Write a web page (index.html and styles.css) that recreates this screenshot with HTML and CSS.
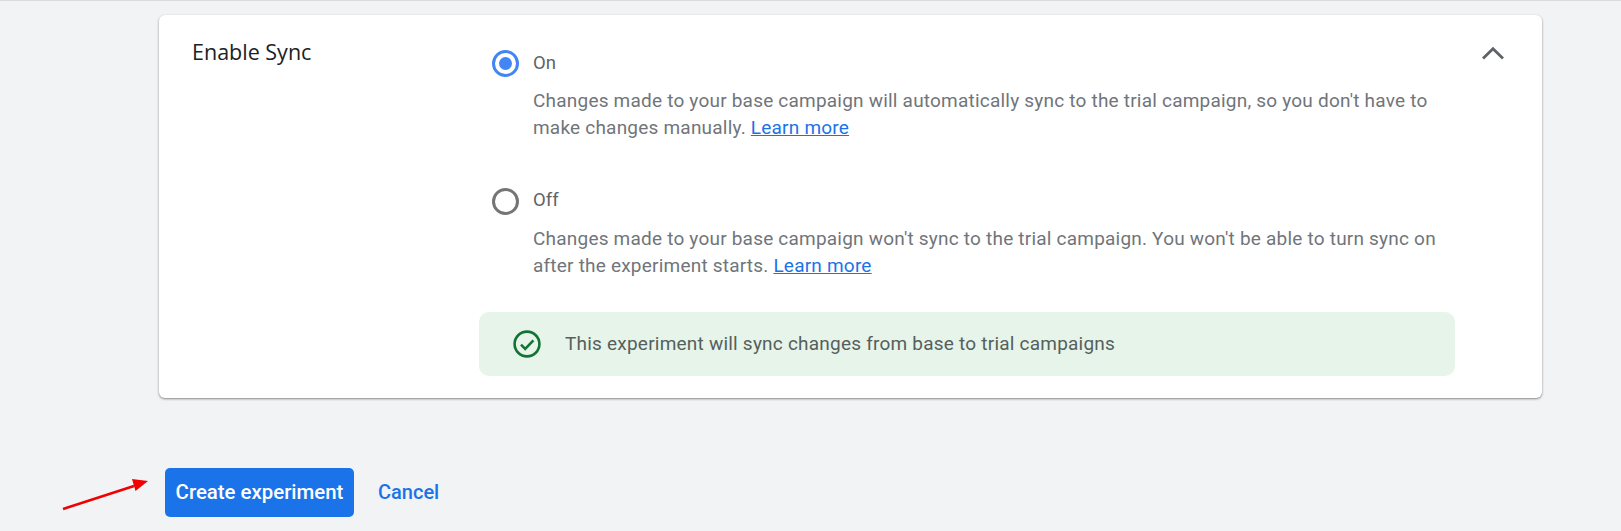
FILE: index.html
```html
<!DOCTYPE html>
<html lang="en">
<head>
<meta charset="utf-8">
<title>Enable Sync</title>
<link rel="stylesheet" href="styles.css">
</head>
<body>
<main class="page">
  <section class="card">
    <h2 class="card-title">Enable Sync</h2>
    <div class="card-body">
      <div class="option option-first">
        <span class="radio radio-on"><span class="radio-dot"></span></span>
        <div class="option-text">
          <div class="option-label">On</div>
          <p class="option-desc">Changes made to your base campaign will automatically sync to the trial campaign, so you don't have to<br>make changes manually. <a class="link" href="#">Learn more</a></p>
        </div>
      </div>
      <div class="option option-second">
        <span class="radio"></span>
        <div class="option-text">
          <div class="option-label">Off</div>
          <p class="option-desc">Changes made to your base campaign won't sync to the trial campaign. You won't be able to turn sync on<br>after the experiment starts. <a class="link" href="#">Learn more</a></p>
        </div>
      </div>
      <div class="notice">
        <svg class="notice-icon" viewBox="0 0 28 28" aria-hidden="true">
          <circle cx="14" cy="14" r="12.4" fill="none" stroke="#137333" stroke-width="2.6"/>
          <path d="M8 14.6l4.2 4.2L20.4 10.4" fill="none" stroke="#137333" stroke-width="2.6"/>
        </svg>
        <span class="notice-text">This experiment will sync changes from base to trial campaigns</span>
      </div>
    </div>
    <button class="collapse" type="button" aria-label="Collapse">
      <svg viewBox="0 0 24 14" width="24" height="14" aria-hidden="true">
        <path d="M2 12.5L12 2.7l10 9.8" fill="none" stroke="#5f6368" stroke-width="2.8"/>
      </svg>
    </button>
  </section>
  <div class="actions">
    <svg class="arrow" viewBox="0 0 90 34" width="90" height="34" aria-hidden="true">
      <path d="M2 31L73 8" fill="none" stroke="#f00000" stroke-width="2.6"/>
      <path d="M87 3L71 1l3.500 12z" fill="#f00000"/>
    </svg>
    <button class="btn-primary" type="button">Create experiment</button>
    <a class="btn-text" href="#">Cancel</a>
  </div>
</main>
</body>
</html>
```
FILE: styles.css
```css
html, body {
  margin: 0;
  padding: 0;
  background: #f1f3f4;
}
body {
  font-family: Roboto, "Liberation Sans", sans-serif;
  height: 531px;
  overflow: hidden;
  border-top: 1px solid #dadce0;
  box-sizing: border-box;
}
.page {
  padding: 14px 79px 0 159px;
}
.card {
  position: relative;
  display: flex;
  height: 383px;
  box-sizing: border-box;
  background: #fff;
  border-radius: 6px;
  box-shadow: 0 1px 2px rgba(60, 64, 67, 0.45), 0 1px 3px rgba(60, 64, 67, 0.2);
}
.card-title {
  width: 287px;
  flex: none;
  margin: 0;
  padding: 22px 0 0 33px;
  box-sizing: content-box;
  font: 400 21.5px/30px "Open Sans", Roboto, sans-serif;
  color: #202124;
}
.card-body {
  width: 976px;
  padding-top: 35px;
}
.option {
  display: flex;
  padding-left: 13px;
}
.option-second {
  margin-top: 47px;
}
.radio {
  flex: none;
  width: 27px;
  height: 27px;
  box-sizing: border-box;
  border: 3px solid #757575;
  border-radius: 50%;
  display: flex;
  align-items: center;
  justify-content: center;
}
.radio-on {
  border-color: #4285f4;
}
.radio-dot {
  width: 13px;
  height: 13px;
  border-radius: 50%;
  background: #4285f4;
}
.option-text {
  margin-left: 14px;
}
.option-label {
  font-size: 18.5px;
  line-height: 26px;
  color: #5f6368;
}
.option-second .option-label {
  line-height: 24px;
}
.option-desc {
  margin: 11px 0 0;
  font-size: 19px;
  line-height: 27px;
  letter-spacing: 0.21px;
  color: #70757a;
}
.option-second .option-desc {
  margin-top: 13px;
}
.link {
  color: #1a73e8;
}
.notice {
  display: flex;
  align-items: center;
  height: 64px;
  margin-top: 33px;
  padding-left: 34px;
  background: #e6f4ea;
  border-radius: 10px;
  font-size: 19px;
  letter-spacing: 0.22px;
  color: #55605c;
}
.notice-icon {
  width: 28px;
  height: 28px;
  flex: none;
}
.notice-text {
  margin: 0 0 2px 24px;
}
.collapse {
  position: absolute;
  top: 31px;
  right: 37px;
  padding: 0;
  display: flex;
  border: 0;
  background: none;
}
.actions {
  position: relative;
  display: flex;
  align-items: center;
  margin: 70px 0 0 6px;
  height: 49px;
}
.arrow {
  position: absolute;
  left: -104px;
  top: 10px;
}
.btn-primary {
  width: 189px;
  height: 49px;
  padding: 0 0 2px;
  border: 0;
  border-radius: 5px;
  background: #1a73e8;
  color: #fff;
  font: 500 20.4px Roboto, sans-serif;
}
.btn-text {
  margin: 0 0 2px 24px;
  color: #1a73e8;
  font-size: 20px;
  font-weight: 500;
  text-decoration: none;
}
```
